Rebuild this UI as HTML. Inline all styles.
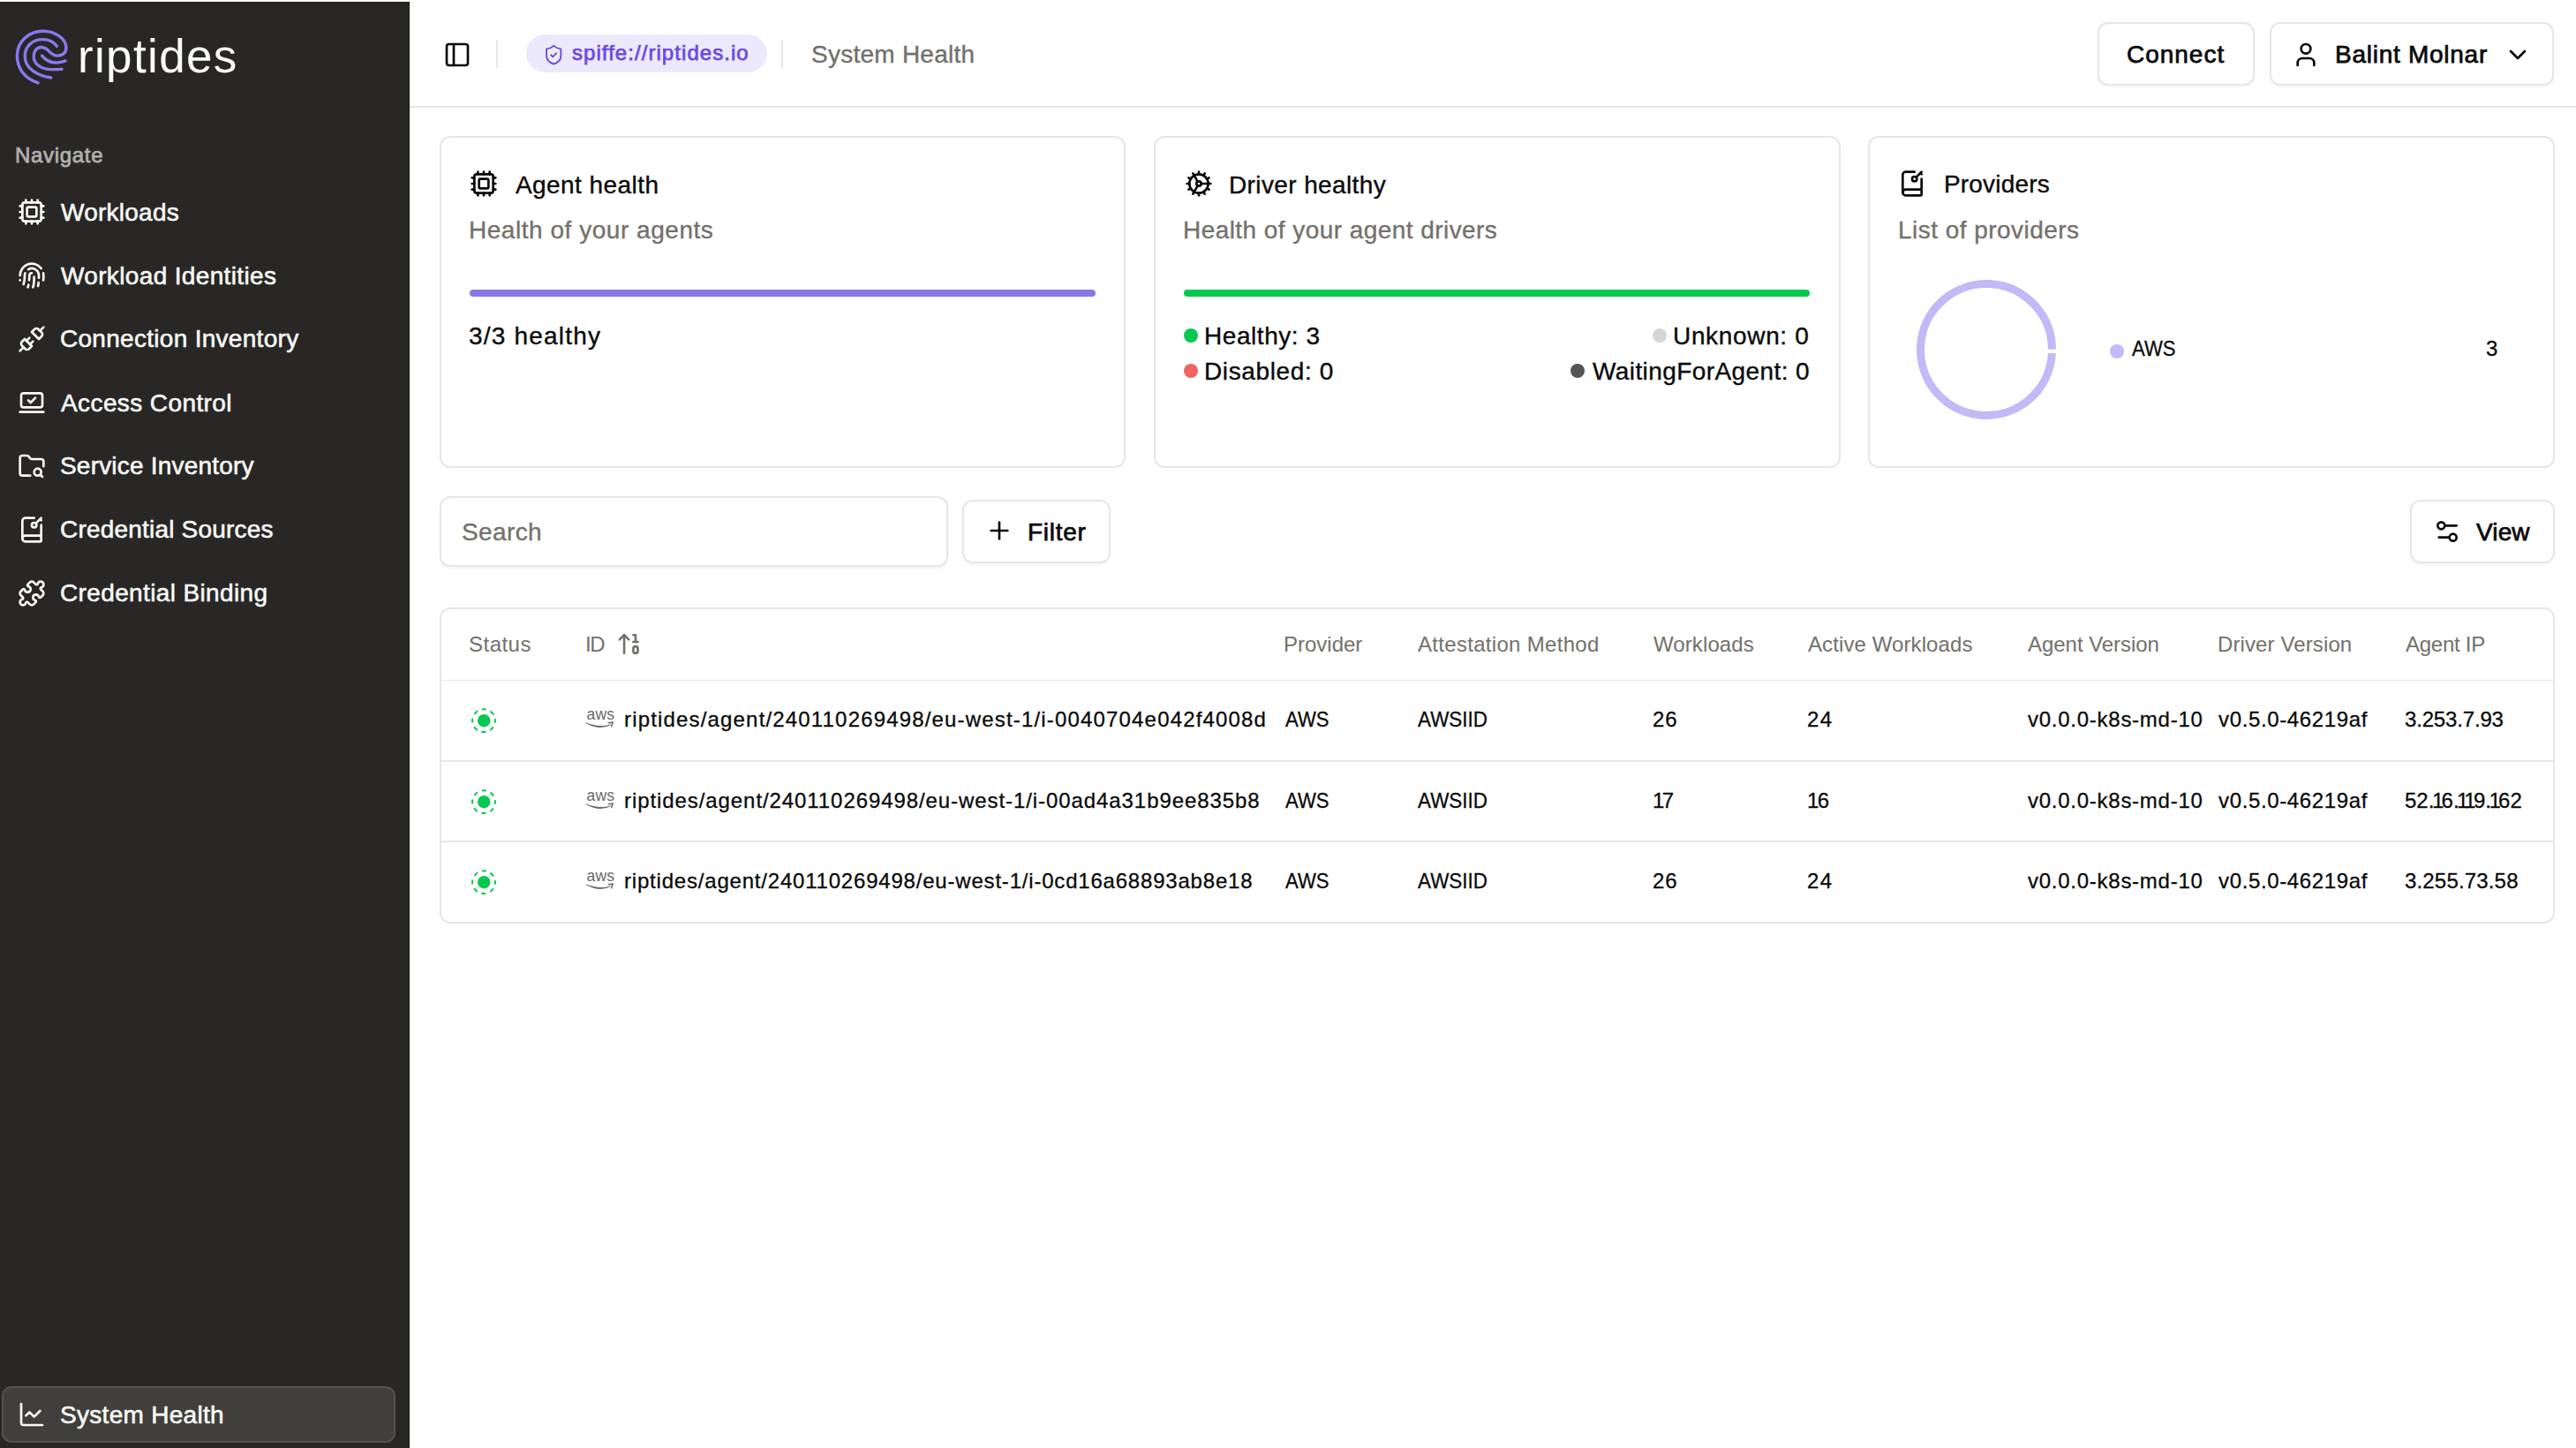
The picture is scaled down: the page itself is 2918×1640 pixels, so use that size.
<!DOCTYPE html>
<html><head><meta charset="utf-8">
<style>
*{box-sizing:border-box;margin:0;padding:0}
html,body{width:2918px;height:1640px;overflow:hidden;background:#fff;font-family:"Liberation Sans",sans-serif;color:#0a0a0a}
.a{position:absolute}
.t28{position:absolute;font-size:28px;line-height:28px;white-space:nowrap;-webkit-text-stroke-width:0.35px}
.t24{position:absolute;font-size:24px;line-height:24px;white-space:nowrap;-webkit-text-stroke-width:0.3px}
.b{-webkit-text-stroke-width:0.75px}
svg.i{position:absolute;fill:none;stroke:currentColor;stroke-width:2;stroke-linecap:round;stroke-linejoin:round}
#sb{position:absolute;left:0;top:2px;width:464px;height:1638px;background:#282725;border-top:1px solid #1d1c1a;border-right:1px solid #1d1c1a}
.nav{color:#fafaf8;-webkit-text-stroke-width:0.55px}
.gray{color:#74716c}
.t24.gray{-webkit-text-stroke-width:0.05px}
.card{position:absolute;top:154px;height:376px;border:2px solid #e6e6e6;border-radius:12px;background:#fff}
.btn{position:absolute;border:2px solid #e6e6e6;border-radius:12px;background:#fff;box-shadow:0 2px 3px rgba(0,0,0,0.04)}
.dot{position:absolute;width:16px;height:16px;border-radius:50%}
.hl{position:absolute;height:2px;background:#e8e8e8}
</style></head><body>

<!-- SIDEBAR -->
<div id="sb"></div>
<svg class="a" style="left:10px;top:25px" width="80" height="80" viewBox="0 0 1448 1448" fill="none" stroke="#8b78ef" stroke-width="62" stroke-linecap="round">
<path d="M600 1245 C300 1150 165 920 170 680 C175 390 420 185 700 185 C960 185 1170 350 1175 520 C1180 640 1090 690 1000 690 C900 690 850 620 800 575 C750 530 710 515 660 515 C560 520 505 610 510 720 C520 880 690 965 850 970 C950 973 1030 968 1085 965"/>
<path d="M865 1140 C600 1100 330 960 330 700 C330 480 500 355 700 355 C830 355 930 420 985 495"/>
<path d="M680 690 C760 790 880 840 1000 830 C1070 825 1120 812 1160 795"/>
</svg>
<div class="t28" style="left:88px;top:37px;font-size:53px;line-height:53px;color:#fafaf9;letter-spacing:1.35px;-webkit-text-stroke-width:0">riptides</div>

<div class="t24 b" style="left:17px;top:164px;color:#b3b0ab;letter-spacing:0.686px">Navigate</div>

<!-- nav icons -->
<svg class="i nav" style="left:20px;top:224px" width="32" height="32" viewBox="0 0 24 24"><path d="M12 20v2M12 2v2M17 20v2M17 2v2M2 12h2M2 17h2M2 7h2M20 12h2M20 17h2M20 7h2M7 20v2M7 2v2"/><rect x="4" y="4" width="16" height="16" rx="2"/><rect x="8" y="8" width="8" height="8" rx="1"/></svg>
<div class="t28 nav" style="left:69px;top:227px;letter-spacing:0.25px">Workloads</div>

<svg class="i nav" style="left:20px;top:296px" width="32" height="32" viewBox="0 0 24 24"><path d="M12 10a2 2 0 0 0-2 2c0 1.02-.1 2.51-.26 4"/><path d="M14 13.12c0 2.38 0 6.38-1 8.88"/><path d="M17.29 21.02c.12-.6.43-2.3.5-3.02"/><path d="M2 12a10 10 0 0 1 18-6"/><path d="M2 16h.01"/><path d="M21.8 16c.2-2 .131-5.354 0-6"/><path d="M5 19.5C5.5 18 6 15 6 12a6 6 0 0 1 .34-2"/><path d="M8.65 22c.21-.66.45-1.32.57-2"/><path d="M9 6.8a6 6 0 0 1 9 5.2v2"/></svg>
<div class="t28 nav" style="left:69px;top:299px;letter-spacing:0.35px">Workload Identities</div>

<svg class="i nav" style="left:20px;top:368px" width="32" height="32" viewBox="0 0 24 24"><path d="m19 5 3-3"/><path d="m2 22 3-3"/><path d="M6.3 20.3a2.4 2.4 0 0 0 3.4 0L12 18l-6-6-2.3 2.3a2.4 2.4 0 0 0 0 3.4Z"/><path d="M7.5 13.5 10 11"/><path d="M10.5 16.5 13 14"/><path d="m12 6 6 6 2.3-2.3a2.4 2.4 0 0 0 0-3.4l-2.6-2.6a2.4 2.4 0 0 0-3.4 0Z"/></svg>
<div class="t28 nav" style="left:68px;top:370px;letter-spacing:0.291px">Connection Inventory</div>

<svg class="i nav" style="left:20px;top:440px" width="32" height="32" viewBox="0 0 24 24"><path d="M2 20h20"/><path d="m9 10 2 2 4-4"/><rect x="3" y="4" width="18" height="12" rx="2"/></svg>
<div class="t28 nav" style="left:69px;top:443px;letter-spacing:0.4px">Access Control</div>

<svg class="i nav" style="left:20px;top:512px" width="32" height="32" viewBox="0 0 24 24"><circle cx="17" cy="17" r="3"/><path d="M10.7 20H4a2 2 0 0 1-2-2V5a2 2 0 0 1 2-2h3.9a2 2 0 0 1 1.69.9l.81 1.2a2 2 0 0 0 1.68.9H20a2 2 0 0 1 2 2v4.1"/><path d="m21 21-1.9-1.9"/></svg>
<div class="t28 nav" style="left:68px;top:514px;letter-spacing:0.194px">Service Inventory</div>

<svg class="i nav" style="left:20px;top:584px" width="32" height="32" viewBox="0 0 24 24"><path d="m19 3 1 1"/><path d="m20 2-4.5 4.5"/><path d="M20 8v13a1 1 0 0 1-1 1H6.5a2.5 2.5 0 0 1 0-5H20"/><path d="M4 19.5v-15A2.5 2.5 0 0 1 6.5 2H14"/><circle cx="14" cy="8" r="2"/></svg>
<div class="t28 nav" style="left:68px;top:586px;letter-spacing:0.194px">Credential Sources</div>

<svg class="i nav" style="left:20px;top:656px" width="32" height="32" viewBox="0 0 24 24"><path d="M15.39 4.39a1 1 0 0 0 1.68-.474 2.5 2.5 0 1 1 3.014 3.015 1 1 0 0 0-.474 1.68l1.683 1.682a2.414 2.414 0 0 1 0 3.414L19.61 15.39a1 1 0 0 1-1.68-.474 2.5 2.5 0 1 0-3.014 3.015 1 1 0 0 1 .474 1.68l-1.683 1.682a2.414 2.414 0 0 1-3.414 0L8.61 19.61a1 1 0 0 0-1.68.474 2.5 2.5 0 1 1-3.014-3.015 1 1 0 0 0 .474-1.68l-1.683-1.682a2.414 2.414 0 0 1 0-3.414L4.39 8.61a1 1 0 0 1 1.68.474 2.5 2.5 0 1 0 3.014-3.015 1 1 0 0 1-.474-1.68l1.683-1.682a2.414 2.414 0 0 1 3.414 0z"/></svg>
<div class="t28 nav" style="left:68px;top:658px;letter-spacing:0.365px">Credential Binding</div>

<div class="a" style="left:2px;top:1570px;width:446px;height:64px;background:#403f3b;border:2px solid #53524e;border-radius:11px"></div>
<svg class="i nav" style="left:20px;top:1586px" width="32" height="32" viewBox="0 0 24 24"><path d="M3 3v16a2 2 0 0 0 2 2h16"/><path d="m19 9-5 5-4-4-3 3"/></svg>
<div class="t28 nav" style="left:68px;top:1589px;letter-spacing:0.3px">System Health</div>

<!-- HEADER -->
<div class="hl" style="left:464px;top:120px;width:2454px;background:#e6e6e6"></div>
<svg class="i" style="left:502px;top:46px;color:#0a0a0a" width="32" height="32" viewBox="0 0 24 24"><rect width="18" height="18" x="3" y="3" rx="2"/><path d="M9 3v18"/></svg>
<div class="a" style="left:562px;top:45px;width:2px;height:32px;background:#e6e6e6"></div>
<div class="a" style="left:596px;top:39px;width:273px;height:43px;border-radius:22px;background:#ede9fc"></div>
<svg class="i" style="left:615px;top:50px;color:#6b47dc;stroke-width:1.8" width="24.5" height="24.5" viewBox="0 0 24 24"><path d="M20 13c0 5-3.5 7.5-7.66 8.95a1 1 0 0 1-.67-.01C7.5 20.5 4 18 4 13V6a1 1 0 0 1 1-1c2 0 4.5-1.2 6.24-2.72a1.17 1.17 0 0 1 1.52 0C14.51 3.81 17 5 19 5a1 1 0 0 1 1 1z"/><path d="m9 12 2 2 4-4"/></svg>
<div class="t24 b" style="left:648px;top:48px;color:#6d4ae0;letter-spacing:1.056px">spiffe://riptides.io</div>
<div class="a" style="left:885px;top:45px;width:2px;height:32px;background:#e6e6e6"></div>
<div class="t28" style="left:919px;top:48px;color:#72706b;letter-spacing:0.25px">System Health</div>

<div class="btn" style="left:2376px;top:25px;width:178px;height:72px"></div>
<div class="t28 b" style="left:2409px;top:48px;letter-spacing:0.984px">Connect</div>
<div class="btn" style="left:2571px;top:25px;width:322px;height:72px"></div>
<svg class="i" style="left:2596px;top:46px" width="32" height="32" viewBox="0 0 24 24"><path d="M19 21v-2a4 4 0 0 0-4-4H9a4 4 0 0 0-4 4v2"/><circle cx="12" cy="7" r="4"/></svg>
<div class="t28 b" style="left:2645px;top:48px;letter-spacing:0.734px">Balint Molnar</div>
<svg class="i" style="left:2836px;top:46px" width="32" height="32" viewBox="0 0 24 24"><path d="m6 9 6 6 6-6"/></svg>

<!-- CARDS -->
<div class="card" style="left:498px;width:777px"></div>
<svg class="i" style="left:532px;top:192px" width="32" height="32" viewBox="0 0 24 24"><path d="M12 20v2M12 2v2M17 20v2M17 2v2M2 12h2M2 17h2M2 7h2M20 12h2M20 17h2M20 7h2M7 20v2M7 2v2"/><rect x="4" y="4" width="16" height="16" rx="2"/><rect x="8" y="8" width="8" height="8" rx="1"/></svg>
<div class="t28" style="left:584px;top:196px;letter-spacing:0.432px">Agent health</div>
<div class="t28 gray" style="left:531px;top:247px;letter-spacing:0.535px">Health of your agents</div>
<div class="a" style="left:532px;top:328px;width:709px;height:8px;border-radius:4px;background:#8b76e8"></div>
<div class="t28" style="left:531px;top:367px;letter-spacing:1.2px">3/3 healthy</div>

<div class="card" style="left:1307px;width:778px"></div>
<svg class="i" style="left:1342px;top:192px" width="32" height="32" viewBox="0 0 24 24"><path d="M12 20a8 8 0 1 0 0-16 8 8 0 0 0 0 16Z"/><path d="M12 14a2 2 0 1 0 0-4 2 2 0 0 0 0 4Z"/><path d="M12 2v2"/><path d="M12 22v-2"/><path d="m17 20.66-1-1.73"/><path d="M11 10.27 7 3.34"/><path d="m20.66 17-1.73-1"/><path d="m3.34 7 1.73 1"/><path d="M14 12h8"/><path d="M2 12h2"/><path d="m20.66 7-1.73 1"/><path d="m3.34 17 1.73-1"/><path d="m17 3.34-1 1.73"/><path d="m11 13.73-4 6.93"/></svg>
<div class="t28" style="left:1392px;top:196px;letter-spacing:0.384px">Driver healthy</div>
<div class="t28 gray" style="left:1340px;top:247px;letter-spacing:0.441px">Health of your agent drivers</div>
<div class="a" style="left:1341px;top:328px;width:709px;height:8px;border-radius:4px;background:#06c850"></div>
<div class="dot" style="left:1341px;top:372px;background:#06c850"></div>
<div class="t28" style="left:1364px;top:367px;letter-spacing:0.552px">Healthy: 3</div>
<div class="dot" style="left:1341px;top:412px;background:#f26262"></div>
<div class="t28" style="left:1364px;top:407px;letter-spacing:0.62px">Disabled: 0</div>
<div class="dot" style="left:1872px;top:372px;background:#d6d6d6"></div>
<div class="t28" style="left:1895px;top:367px;letter-spacing:0.662px">Unknown: 0</div>
<div class="dot" style="left:1779px;top:412px;background:#545452"></div>
<div class="t28" style="left:1804px;top:407px;letter-spacing:0.409px">WaitingForAgent: 0</div>

<div class="card" style="left:2116px;width:778px"></div>
<svg class="i" style="left:2150px;top:192px" width="32" height="32" viewBox="0 0 24 24"><path d="m19 3 1 1"/><path d="m20 2-4.5 4.5"/><path d="M20 8v13a1 1 0 0 1-1 1H6.5a2.5 2.5 0 0 1 0-5H20"/><path d="M4 19.5v-15A2.5 2.5 0 0 1 6.5 2H14"/><circle cx="14" cy="8" r="2"/></svg>
<div class="t28" style="left:2202px;top:195px;letter-spacing:0.175px">Providers</div>
<div class="t28 gray" style="left:2150px;top:247px;letter-spacing:0.46px">List of providers</div>
<svg class="a" style="left:2170px;top:316px" width="160" height="160" viewBox="0 0 160 160"><circle cx="80" cy="80" r="74.5" fill="none" stroke="#c4b8f6" stroke-width="9" stroke-dasharray="463.1 5" transform="rotate(3 80 80)"/></svg>
<div class="dot" style="left:2390px;top:390px;background:#c4b8f6"></div>
<div class="t24" style="left:2415px;top:383px;transform:scaleX(0.92);transform-origin:0 0">AWS</div>
<div class="t24" style="left:2816px;top:383px">3</div>

<!-- TOOLBAR -->
<div class="btn" style="left:498px;top:562px;width:576px;height:80px;box-shadow:0 2px 3px rgba(0,0,0,0.05)"></div>
<div class="t28 gray" style="left:523px;top:589px;letter-spacing:0.38px">Search</div>
<div class="btn" style="left:1090px;top:566px;width:168px;height:72px"></div>
<svg class="i" style="left:1116px;top:585px" width="32" height="32" viewBox="0 0 24 24"><path d="M5 12h14"/><path d="M12 5v14"/></svg>
<div class="t28 b" style="left:1164px;top:589px;letter-spacing:0.72px">Filter</div>
<div class="btn" style="left:2730px;top:566px;width:164px;height:72px"></div>
<svg class="i" style="left:2756px;top:586px" width="32" height="32" viewBox="0 0 24 24"><path d="M20 7h-9"/><path d="M14 17H5"/><circle cx="17" cy="17" r="3"/><circle cx="7" cy="7" r="3"/></svg>
<div class="t28 b" style="left:2805px;top:589px;letter-spacing:0.137px">View</div>

<!-- TABLE -->
<div class="a" style="left:498px;top:688px;width:2396px;height:358px;border:2px solid #e6e6e6;border-radius:12px"></div>
<div class="hl" style="left:500px;top:770px;width:2392px;height:1px"></div>
<div class="hl" style="left:500px;top:861px;width:2392px"></div>
<div class="hl" style="left:500px;top:952px;width:2392px"></div>

<div class="t24 gray" style="left:531px;top:718px;letter-spacing:0.48px">Status</div>
<div class="t24 gray" style="left:663px;top:718px;letter-spacing:-1.5px">ID</div>
<svg class="i gray" style="left:698px;top:714px" width="31" height="31" viewBox="0 0 24 24"><path d="m3 8 4-4 4 4"/><path d="M7 4v16"/><path d="M17 10V4h-2"/><path d="M15 10h4"/><rect x="15" y="14" width="4" height="6" ry="2"/></svg>
<div class="t24 gray" style="left:1454px;top:718px;letter-spacing:-0.004px">Provider</div>
<div class="t24 gray" style="left:1606px;top:718px;letter-spacing:0.305px">Attestation Method</div>
<div class="t24 gray" style="left:1873px;top:718px;letter-spacing:0.1px">Workloads</div>
<div class="t24 gray" style="left:2048px;top:718px;letter-spacing:0.1px">Active Workloads</div>
<div class="t24 gray" style="left:2297px;top:718px;letter-spacing:-0.04px">Agent Version</div>
<div class="t24 gray" style="left:2512px;top:718px;letter-spacing:0.115px">Driver Version</div>
<div class="t24 gray" style="left:2725px;top:718px;letter-spacing:-0.257px">Agent IP</div>

<!--ROWS-->
<svg class="a" style="left:534px;top:802px" width="28" height="28" viewBox="0 0 28 28"><circle cx="14" cy="14.2" r="12.9" fill="none" stroke="#06c850" stroke-width="2" stroke-dasharray="5.2 4.93" stroke-dashoffset="2.6"/><circle cx="14.2" cy="14.2" r="7.25" fill="#06c850"/></svg>
<svg class="a" style="left:662px;top:804px" width="36" height="24" viewBox="0 0 36 24"><text x="2.6" y="11" font-family="Liberation Sans" font-size="17.5" fill="#6a6a68" letter-spacing="0.15">aws</text><path d="M1.8 14.3 Q17 20.7 29.8 16.2 L30 16.9 Q17 24 1.6 14.9 Z" fill="#6a6a68"/><path d="M27.3 14.7 L32.3 14.1 L30.6 18.7" fill="none" stroke="#6a6a68" stroke-width="1.5" stroke-linecap="round" stroke-linejoin="round"/></svg>
<div class="t24" style="left:707px;top:803px;letter-spacing:1.17px">riptides/agent/240110269498/eu-west-1/i-0040704e042f4008d</div>
<div class="t24" style="left:1456px;top:803px;transform:scaleX(0.92);transform-origin:0 0">AWS</div>
<div class="t24" style="left:1606px;top:803px;transform:scaleX(0.935);transform-origin:0 0">AWSIID</div>
<div class="t24" style="left:1872px;top:803px;letter-spacing:1.0px">26</div>
<div class="t24" style="left:2047px;top:803px;letter-spacing:1.5px">24</div>
<div class="t24" style="left:2297px;top:803px;letter-spacing:0.74px">v0.0.0-k8s-md-10</div>
<div class="t24" style="left:2513px;top:803px;letter-spacing:0.64px">v0.5.0-46219af</div>
<div class="t24" style="left:2724px;top:803px;letter-spacing:-0.17px">3.253.7.93</div>
<svg class="a" style="left:534px;top:894px" width="28" height="28" viewBox="0 0 28 28"><circle cx="14" cy="14.2" r="12.9" fill="none" stroke="#06c850" stroke-width="2" stroke-dasharray="5.2 4.93" stroke-dashoffset="2.6"/><circle cx="14.2" cy="14.2" r="7.25" fill="#06c850"/></svg>
<svg class="a" style="left:662px;top:896px" width="36" height="24" viewBox="0 0 36 24"><text x="2.6" y="11" font-family="Liberation Sans" font-size="17.5" fill="#6a6a68" letter-spacing="0.15">aws</text><path d="M1.8 14.3 Q17 20.7 29.8 16.2 L30 16.9 Q17 24 1.6 14.9 Z" fill="#6a6a68"/><path d="M27.3 14.7 L32.3 14.1 L30.6 18.7" fill="none" stroke="#6a6a68" stroke-width="1.5" stroke-linecap="round" stroke-linejoin="round"/></svg>
<div class="t24" style="left:707px;top:895px;letter-spacing:0.92px">riptides/agent/240110269498/eu-west-1/i-00ad4a31b9ee835b8</div>
<div class="t24" style="left:1456px;top:895px;transform:scaleX(0.92);transform-origin:0 0">AWS</div>
<div class="t24" style="left:1606px;top:895px;transform:scaleX(0.935);transform-origin:0 0">AWSIID</div>
<div class="t24" style="left:1872px;top:895px;letter-spacing:0px"><span style="letter-spacing:-2.60px">1</span>7</div>
<div class="t24" style="left:2047px;top:895px;letter-spacing:0px"><span style="letter-spacing:-1.56px">1</span>6</div>
<div class="t24" style="left:2297px;top:895px;letter-spacing:0.74px">v0.0.0-k8s-md-10</div>
<div class="t24" style="left:2513px;top:895px;letter-spacing:0.64px">v0.5.0-46219af</div>
<div class="t24" style="left:2724px;top:895px;letter-spacing:0px">52<span style="letter-spacing:-2.50px">.</span><span style="letter-spacing:-2.70px">1</span>6<span style="letter-spacing:-2.50px">.</span><span style="letter-spacing:-5.20px">1</span><span style="letter-spacing:-2.70px">1</span>9<span style="letter-spacing:-2.50px">.</span><span style="letter-spacing:-2.70px">1</span>62</div>
<svg class="a" style="left:534px;top:985px" width="28" height="28" viewBox="0 0 28 28"><circle cx="14" cy="14.2" r="12.9" fill="none" stroke="#06c850" stroke-width="2" stroke-dasharray="5.2 4.93" stroke-dashoffset="2.6"/><circle cx="14.2" cy="14.2" r="7.25" fill="#06c850"/></svg>
<svg class="a" style="left:662px;top:987px" width="36" height="24" viewBox="0 0 36 24"><text x="2.6" y="11" font-family="Liberation Sans" font-size="17.5" fill="#6a6a68" letter-spacing="0.15">aws</text><path d="M1.8 14.3 Q17 20.7 29.8 16.2 L30 16.9 Q17 24 1.6 14.9 Z" fill="#6a6a68"/><path d="M27.3 14.7 L32.3 14.1 L30.6 18.7" fill="none" stroke="#6a6a68" stroke-width="1.5" stroke-linecap="round" stroke-linejoin="round"/></svg>
<div class="t24" style="left:707px;top:986px;letter-spacing:0.8px">riptides/agent/240110269498/eu-west-1/i-0cd16a68893ab8e18</div>
<div class="t24" style="left:1456px;top:986px;transform:scaleX(0.92);transform-origin:0 0">AWS</div>
<div class="t24" style="left:1606px;top:986px;transform:scaleX(0.935);transform-origin:0 0">AWSIID</div>
<div class="t24" style="left:1872px;top:986px;letter-spacing:1.0px">26</div>
<div class="t24" style="left:2047px;top:986px;letter-spacing:1.5px">24</div>
<div class="t24" style="left:2297px;top:986px;letter-spacing:0.74px">v0.0.0-k8s-md-10</div>
<div class="t24" style="left:2513px;top:986px;letter-spacing:0.64px">v0.5.0-46219af</div>
<div class="t24" style="left:2724px;top:986px;letter-spacing:0.17px">3.255.73.58</div>
<!--/ROWS-->
<script>(function(){var w=window.innerWidth;if(w&&Math.abs(w-2918)>4){document.documentElement.style.zoom=(w/2918);}})();</script>
</body></html>
